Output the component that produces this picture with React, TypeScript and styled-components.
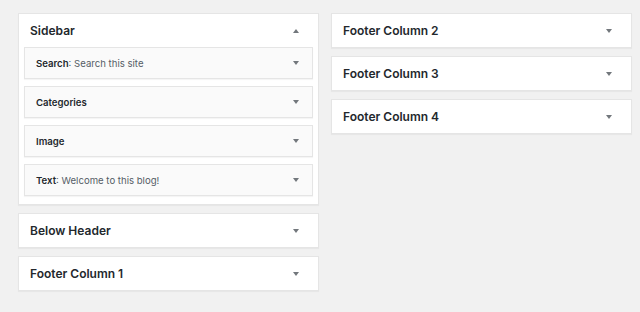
import React from 'react';
import styled, { createGlobalStyle } from 'styled-components';

const GlobalStyle = createGlobalStyle`
  html, body {
    margin: 0;
    padding: 0;
    background: #f1f1f1;
    font-family: Inter, "Noto Sans", "Liberation Sans", sans-serif;
    color: #23282d;
  }
`;

// --- Layout ---
const Page = styled.div`
  display: grid;
  grid-template-columns: 301px 301px;
  column-gap: 12px;
  align-items: start;
  padding: 13px 0 0 18px;
  width: 640px;
  height: 312px;
  box-sizing: border-box;
`;

const Column = styled.div`
  display: flex;
  flex-direction: column;
  gap: 8px;
`;

const Area = styled.div`
  background: #fff;
  border: 1px solid #e5e5e5;
  box-shadow: 0 1px 1px rgba(0, 0, 0, 0.04);
`;

const AreaHeader = styled.div`
  height: 33px;
  display: flex;
  align-items: center;
  justify-content: space-between;
  padding: 0 19px 0 11px;
`;

const AreaTitle = styled.h2`
  margin: 0;
  font-size: 12px;
  font-weight: 600;
  color: #23282d;
`;

const WidgetList = styled.div`
  display: flex;
  flex-direction: column;
  gap: 7px;
  padding: 0 5px 8px 5px;
`;

const Widget = styled.div`
  height: 30px;
  background: #fafafa;
  border: 1px solid #e5e5e5;
  box-shadow: 0 1px 1px rgba(0, 0, 0, 0.04);
  display: flex;
  align-items: center;
  justify-content: space-between;
  padding: 0 13px 0 11px;
`;

const WidgetTitle = styled.h3`
  margin: 0;
  font-size: 9.6px;
  font-weight: 600;
  color: #23282d;
`;

const WidgetSub = styled.span`
  font-weight: 400;
  color: #555d66;
`;

const Arrow = styled.span<{ $up?: boolean }>`
  width: 0;
  height: 0;
  border-left: 3px solid transparent;
  border-right: 3px solid transparent;
  ${(p) => (p.$up ? 'border-bottom: 4px solid #72777c;' : 'border-top: 4px solid #72777c;')}
`;

type WidgetItem = { name: string; sub?: string };

const sidebarWidgets: WidgetItem[] = [
  { name: 'Search', sub: 'Search this site' },
  { name: 'Categories' },
  { name: 'Image' },
  { name: 'Text', sub: 'Welcome to this blog!' },
];

const ClosedArea: React.FC<{ title: string }> = ({ title }) => (
  <Area>
    <AreaHeader>
      <AreaTitle>{title}</AreaTitle>
      <Arrow />
    </AreaHeader>
  </Area>
);

const App: React.FC = () => {
  return (
    <>
      <GlobalStyle />
      <Page>
        <Column>
          <Area>
            <AreaHeader>
              <AreaTitle>Sidebar</AreaTitle>
              <Arrow $up />
            </AreaHeader>
            <WidgetList>
              {sidebarWidgets.map((w) => (
                <Widget key={w.name}>
                  <WidgetTitle>
                    {w.name}
                    {w.sub && <WidgetSub>: {w.sub}</WidgetSub>}
                  </WidgetTitle>
                  <Arrow />
                </Widget>
              ))}
            </WidgetList>
          </Area>
          <ClosedArea title="Below Header" />
          <ClosedArea title="Footer Column 1" />
        </Column>
        <Column>
          <ClosedArea title="Footer Column 2" />
          <ClosedArea title="Footer Column 3" />
          <ClosedArea title="Footer Column 4" />
        </Column>
      </Page>
    </>
  );
};

export default App;
